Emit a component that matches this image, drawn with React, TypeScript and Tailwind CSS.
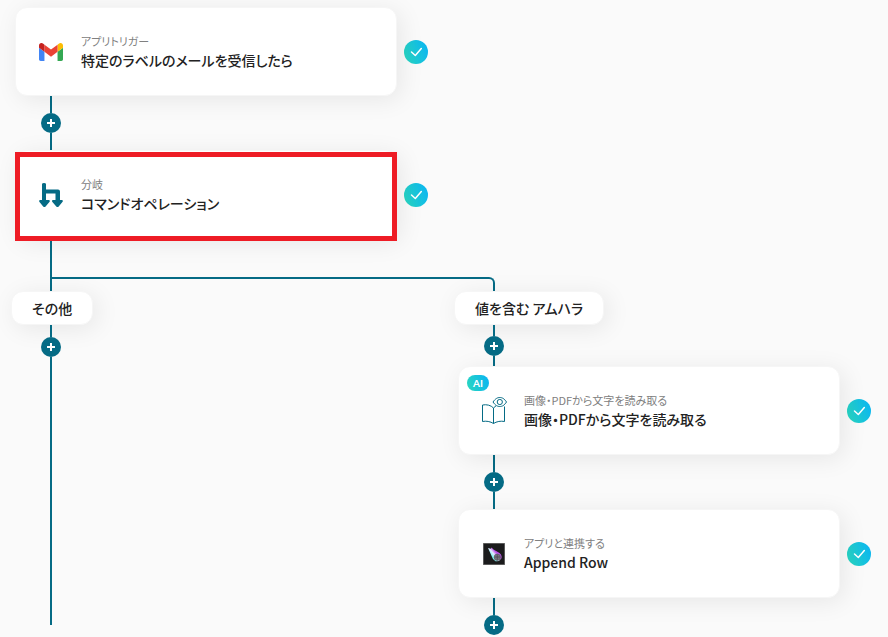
import React from 'react';

interface StepCardProps {
  icon: React.ReactNode;
  caption: string;
  title: string;
  selected?: boolean;
  ai?: boolean;
}

const GmailIcon = () => (
  <svg viewBox="52 42 88 66" className="w-6" aria-hidden="true">
    <path fill="#4285f4" d="M58 108h14V74L52 59v43c0 3.32 2.69 6 6 6" />
    <path fill="#34a853" d="M120 108h14c3.32 0 6-2.69 6-6V59l-20 15" />
    <path fill="#fbbc04" d="M120 48v26l20-15v-8c0-7.42-8.47-11.65-14.4-7.2" />
    <path fill="#ea4335" d="M72 74V48l24 18 24-18v26L96 92" />
    <path fill="#c5221f" d="M52 51v8l20 15V48l-5.600-4.200c-5.940-4.450-14.400-.220-14.400 7.200" />
  </svg>
);

const BranchIcon = () => (
  <svg viewBox="0 0 24 26" className="w-6" fill="#056b85" aria-hidden="true">
    <path d="M3 2.200Q3 1 5 1T7 2.200V7.500H19Q21 7.500 21 9.500V18H22.800Q24.600 18.400 23.400 20L19.700 24.400Q18.500 25.600 17.300 24.400L13.400 20Q12.400 18.400 14 18H16.500V11.500H7V18H9.800Q11.500 18.400 10.400 20L6.600 24.400Q5.400 25.600 4.200 24.400L.500 20Q-.500 18.400 1.200 18H3Z" />
  </svg>
);

const BookEyeIcon = () => (
  <svg viewBox="0 0 26 29" className="w-[26px] shrink-0" fill="none" stroke="#056b85" aria-hidden="true">
    <path d="M12.500 27.500C9.500 25.500 5 24.700 1.500 25.500V9C5.500 8.200 10 9.200 12.500 12V27.500C15.500 25.500 20 24.700 23.500 25.500V10.500M12.500 12L15 9.800" />
    <path d="M12 6C14.500 2.500 16.500 1.500 18.800 1.500S23.200 2.500 25.500 6C23.200 9.500 21.200 10.500 18.800 10.500S14.500 9.500 12 6Z" />
    <circle cx="18.800" cy="6" r="2.600" />
  </svg>
);

const CometIcon = () => (
  <svg viewBox="0 0 22 22" className="w-[22px]" aria-hidden="true">
    <defs>
      <linearGradient id="tail" x1="8" y1="13" x2="14" y2="8" gradientUnits="userSpaceOnUse">
        <stop offset=".1" stopColor="#7ff3ee" />
        <stop offset=".45" stopColor="#e5e9ff" />
        <stop offset=".8" stopColor="#b850e6" />
      </linearGradient>
    </defs>
    <path fill="#1b1b1c" stroke="#555" strokeWidth=".600" d="M.300.300h21.400v21.400H.300z" />
    <path fill="url(#tail)" d="M5 5L8 5.800L8.500 4.600L10.500 6.600L16.500 10Q19.400 12.500 18.400 15.500Q16 19 12.500 18.200Q9.500 16.500 8.800 13.500Z" />
    <circle cx="14.300" cy="14.300" r="3.200" fill="#77737d" stroke="#55525e" strokeWidth=".600" />
    <path stroke="#45424c" strokeWidth=".600" fill="none" d="M11.500 14h5.600M14.300 11.500v5.600" />
  </svg>
);

const CheckBadge = () => (
  <span className="flex size-6 shrink-0 items-center justify-center rounded-full bg-linear-[70deg] from-[#2bd8bd] to-[#08b3f5]">
    <svg viewBox="0 0 24 24" className="size-6" fill="none" stroke="#fff" strokeWidth="1.500" strokeLinecap="round" strokeLinejoin="round" role="img" aria-label="完了">
      <path d="M7.500 12L11.300 15.500L17.300 8.500" />
    </svg>
  </span>
);

const Line = ({ className }: { className: string }) => <div className={`w-0.5 bg-[#056b85] ${className}`} />;

const AddButton = () => (
  <button type="button" aria-label="追加" className="flex size-5 items-center justify-center rounded-full bg-[#056b85]">
    <svg viewBox="0 0 8 8" className="size-2" stroke="#fff" strokeWidth="2" aria-hidden="true">
      <path d="M0 4H8M4 0V8" />
    </svg>
  </button>
);

const Connector = ({ before, after }: { before: string; after?: string }) => (
  <div className="ml-[41px] flex w-5 flex-col items-center">
    <Line className={before} />
    <AddButton />
    {after && <Line className={after} />}
  </div>
);

const StepCard = ({ icon, caption, title, selected, ai }: StepCardProps) => (
  <div className="ml-[15px] flex items-center gap-[7px]">
    <div className="relative flex h-[89px] w-[382px] items-center gap-[18px] rounded-xl border border-[#f6f6f6] bg-white px-[23px] shadow-[4px_4px_24px_rgba(0,0,0,0.08)]">
      {/* highlight frame, drawn over the card and the line below it */}
      {selected && <div className="absolute -inset-x-px top-px -bottom-[3px] border-[5px] border-[#ee1c25]" />}
      {ai && (
        <span className="absolute top-2 left-2 flex h-4 w-[22px] items-center justify-center rounded-full bg-linear-[70deg] from-[#2bd8bd] to-[#08b3f5] font-[Lato,sans-serif] text-[10px] font-bold text-white">
          AI
        </span>
      )}
      <div className="flex w-6 shrink-0 justify-center">{icon}</div>
      <div>
        <p className="text-[11px] leading-4 text-[#808080]">{caption}</p>
        <p className="text-sm leading-[22px] font-medium">{title}</p>
      </div>
    </div>
    <CheckBadge />
  </div>
);

const BranchLabel = ({ children }: { children: React.ReactNode }) => (
  <div className="ml-[11px] flex h-[34px] w-fit items-center rounded-xl border border-[#f6f6f6] bg-white px-5 text-sm font-medium shadow-[4px_4px_24px_rgba(0,0,0,0.08)]">
    {children}
  </div>
);

export default function App() {
  return (
    <main className="min-h-screen overflow-hidden bg-[#fafafa] pt-[7px] pr-0.5 font-['Noto_Sans_CJK_JP',sans-serif] text-[#222] [font-feature-settings:'palt']">
      <StepCard icon={<GmailIcon />} caption="アプリトリガー" title="特定のラベルのメールを受信したら" />
      <Connector before="h-[17px]" after="h-[17px]" />
      <StepCard icon={<BranchIcon />} caption="分岐" title="コマンドオペレーション" selected />
      <Line className="ml-[50px] h-[38px]" />

      <div className="grid grid-cols-2">
        <section>
          <div className="ml-[50px] h-3.5 border-t-2 border-l-2 border-[#056b85]" />
          <BranchLabel>その他</BranchLabel>
          <Connector before="h-3" after="h-[268px]" />
        </section>

        <section>
          <div className="h-3.5 w-[52px] rounded-tr-md border-t-2 border-r-2 border-[#056b85]" />
          <BranchLabel>値を含む アムハラ</BranchLabel>
          <Connector before="h-[11px]" after="h-2.5" />
          <StepCard icon={<BookEyeIcon />} caption="画像・PDFから文字を読み取る" title="画像・PDFから文字を読み取る" ai />
          <Connector before="h-[17px]" after="h-[17px]" />
          <StepCard icon={<CometIcon />} caption="アプリと連携する" title="Append Row" />
          <Connector before="h-[17px]" />
        </section>
      </div>
    </main>
  );
}
